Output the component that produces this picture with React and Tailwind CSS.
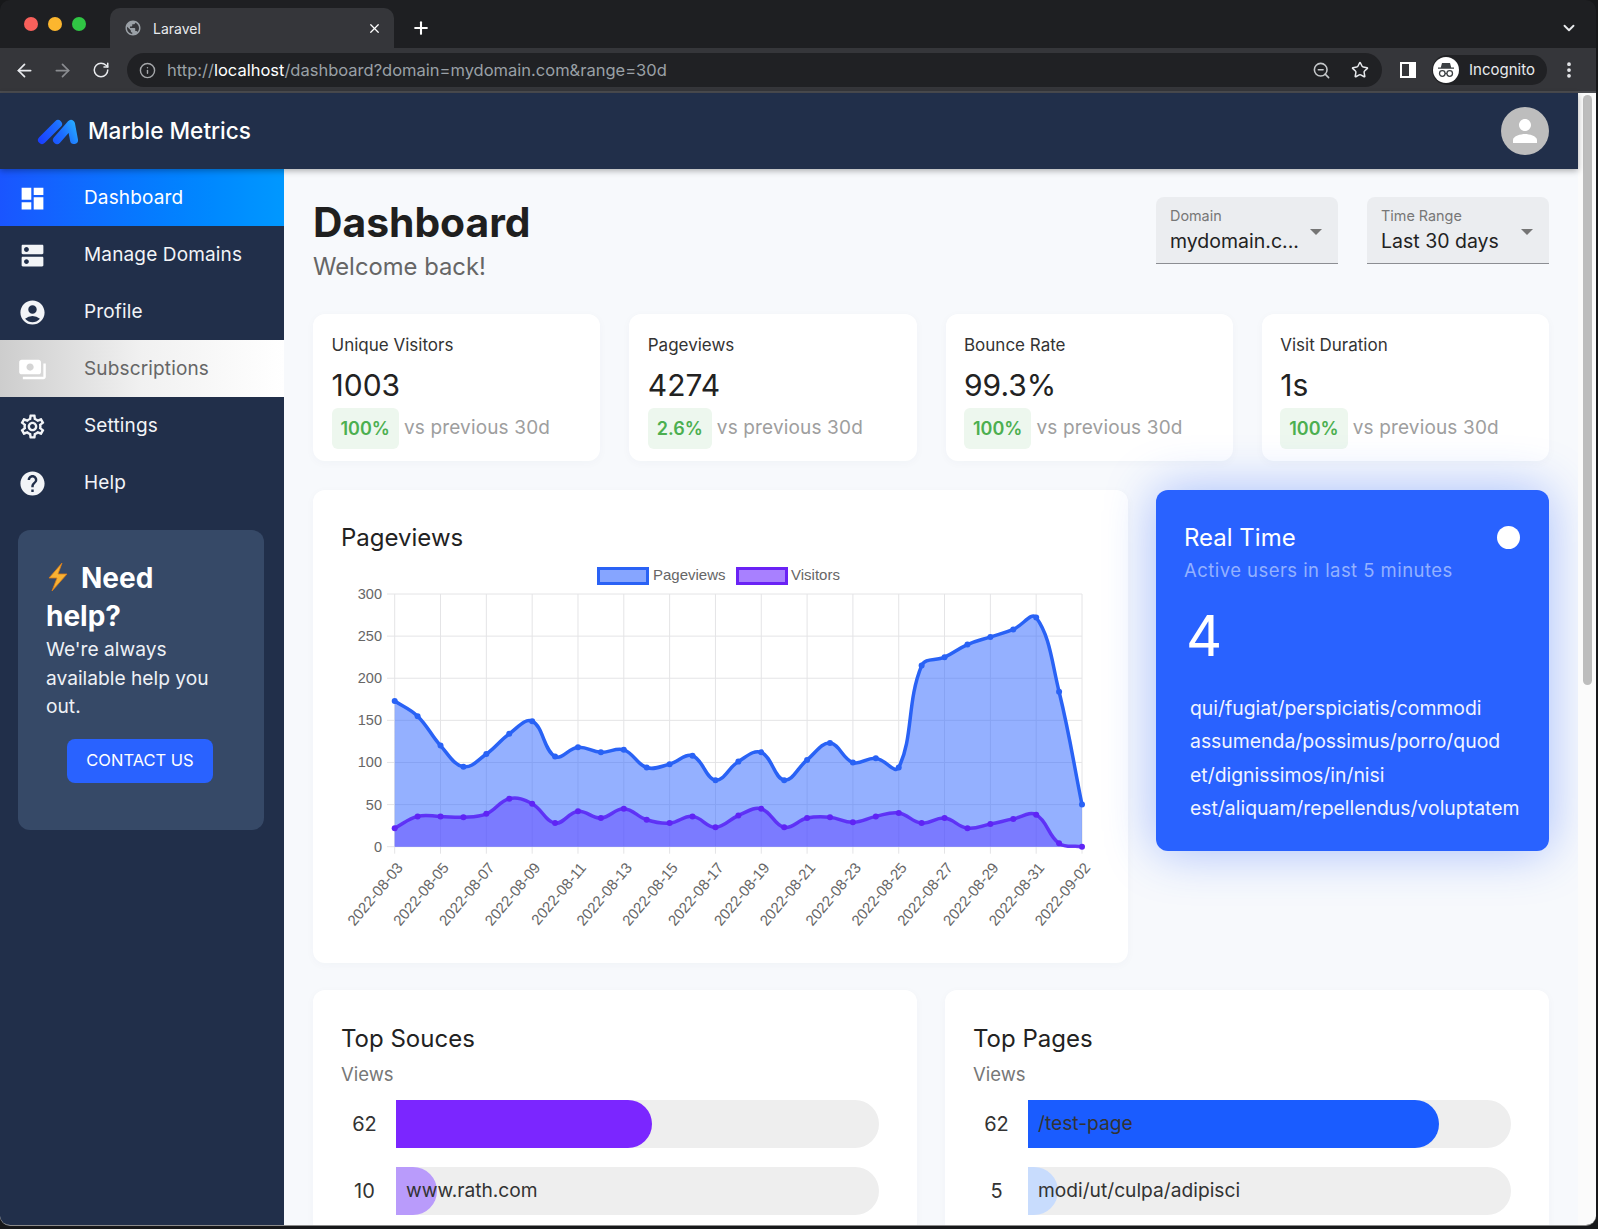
import { ArrowLeft, ArrowRight, RotateCw, Info, ZoomOut, Star, X as CloseIcon, Plus, ChevronDown, EllipsisVertical } from "lucide-react";
import { MdDashboard, MdDns, MdAccountCircle, MdPayments, MdOutlineSettings, MdHelp, MdPerson, MdPublic } from "react-icons/md";

const pageviews = [173, 155, 120, 95, 110, 134, 149, 107, 118, 112, 115, 94, 98, 108, 79, 101, 112, 79, 103, 123, 100, 105, 94, 215, 225, 240, 249, 258, 272, 184, 50];
const visitors = [22, 36, 36, 35, 39, 57, 51, 28, 42, 34, 45, 32, 28, 36, 23, 37, 45, 23, 34, 35, 29, 36, 40, 28, 34, 22, 27, 33, 38, 4, 0];
const dates = ["2022-08-03", "2022-08-05", "2022-08-07", "2022-08-09", "2022-08-11", "2022-08-13", "2022-08-15", "2022-08-17", "2022-08-19", "2022-08-21", "2022-08-23", "2022-08-25", "2022-08-27", "2022-08-29", "2022-08-31", "2022-09-02"];

const L = 394.7, R = 1082, T = 594, B = 846.7;
const X = (i) => L + ((R - L) / 30) * i;
const Y = (v) => B - ((B - T) / 300) * v;

// same bezier chart.js uses with tension 0.4
function linePath(data) {
  const pts = data.map((v, i) => [X(i), Y(v)]);
  let d = `M${pts[0][0]} ${pts[0][1]}`;
  const cps = pts.map((p, i) => {
    const a = pts[Math.max(i - 1, 0)], c = pts[Math.min(i + 1, pts.length - 1)];
    const d1 = Math.hypot(p[0] - a[0], p[1] - a[1]), d2 = Math.hypot(c[0] - p[0], c[1] - p[1]);
    const s = d1 + d2 || 1;
    const fa = (0.4 * d1) / s, fb = (0.4 * d2) / s;
    return [
      [p[0] - fa * (c[0] - a[0]), p[1] - fa * (c[1] - a[1])],
      [p[0] + fb * (c[0] - a[0]), p[1] + fb * (c[1] - a[1])],
    ];
  });
  for (let i = 1; i < pts.length; i++) {
    d += `C${cps[i - 1][1][0]} ${cps[i - 1][1][1]} ${cps[i][0][0]} ${cps[i][0][1]} ${pts[i][0]} ${pts[i][1]}`;
  }
  return d;
}

const menu = [
  { label: "Dashboard", icon: MdDashboard, kind: "active" },
  { label: "Manage Domains", icon: MdDns },
  { label: "Profile", icon: MdAccountCircle },
  { label: "Subscriptions", icon: MdPayments, kind: "light" },
  { label: "Settings", icon: MdOutlineSettings },
  { label: "Help", icon: MdHelp },
];

const stats = [
  { title: "Unique Visitors", value: "1003", change: "100%" },
  { title: "Pageviews", value: "4274", change: "2.6%" },
  { title: "Bounce Rate", value: "99.3%", change: "100%" },
  { title: "Visit Duration", value: "1s", change: "100%" },
];

function BrowserChrome() {
  return (
    <div className="shrink-0 font-['Inter',sans-serif]">
      <div className="flex h-[48px] items-end bg-[#1e1f22] pr-[18px]">
        <div className="flex h-full w-[110px] items-center gap-[10px] pb-[1px] pl-[24px]">
          <span className="h-[14px] w-[14px] rounded-full bg-[#f8605b]" />
          <span className="h-[14px] w-[14px] rounded-full bg-[#fcb62e]" />
          <span className="h-[14px] w-[14px] rounded-full bg-[#30c544]" />
        </div>
        <div className="flex h-[40px] w-[284px] items-center rounded-t-[10px] bg-[#35363a] pl-[14px] pr-[12px]">
          <MdPublic size={18} className="text-[#9aa0a6]" />
          <span className="ml-[11px] flex-1 text-[14px] text-[#e8eaed]">Laravel</span>
          <CloseIcon size={15} className="text-white" />
        </div>
        <Plus size={20} strokeWidth={2.5} className="mb-[10px] ml-[17px] text-white" />
        <ChevronDown size={18} strokeWidth={2.5} className="mb-[11px] ml-auto text-[#e8eaed]" />
      </div>
      <div className="flex h-[45px] items-center border-b-[2px] border-[#4b4c50] bg-[#35363a] pl-[14px] pr-[17px] pt-[1px]">
        <ArrowLeft size={21} className="text-[#e8eaed]" />
        <ArrowRight size={21} className="ml-[17px] text-[#8a8c90]" />
        <RotateCw size={18} className="ml-[19px] text-[#e8eaed]" />
        <div className="ml-[17px] flex h-[34px] w-[1255px] items-center rounded-full bg-[#202124] pl-[12px] pr-[13px]">
          <Info size={17} className="text-[#a5a7aa]" />
          <span className="ml-[11px] whitespace-nowrap text-[16.500px] text-[#9aa0a6]">
            http://<span className="text-white">localhost</span>/dashboard?domain=mydomain.com&amp;range=30d
          </span>
          <ZoomOut size={19} className="ml-auto text-[#c4c7c9]" />
          <Star size={18} className="ml-[20px] text-[#e8eaed]" />
        </div>
        <svg width="18" height="18" viewBox="0 0 18 18" className="ml-[17px]">
          <path d="M1 1h16v16H1z" fill="#fff" />
          <path d="M3 3h7v12H3z" fill="#35363a" />
        </svg>
        <div className="ml-[15px] flex h-[30px] w-[115px] items-center rounded-full bg-[#202124] pl-[1px]">
          <span className="flex h-[26px] w-[26px] items-center justify-center rounded-full bg-white">
            <svg width="20" height="20" viewBox="0 0 20 20" fill="#3c4043">
              <path d="M6 3h8l1.2 4.5H18v1.2H2V7.500h2.800z" />
              <circle cx="6.300" cy="13.500" r="2.800" fill="none" stroke="#3c4043" strokeWidth="1.300" />
              <circle cx="13.700" cy="13.500" r="2.800" fill="none" stroke="#3c4043" strokeWidth="1.300" />
              <path d="M9 13h2v1H9z" />
            </svg>
          </span>
          <span className="ml-[10px] text-[15px] text-[#e8eaed]">Incognito</span>
        </div>
        <EllipsisVertical size={20} strokeWidth={2.5} className="ml-auto text-[#e8eaed]" />
      </div>
    </div>
  );
}

function Logo() {
  return (
    <svg width="42" height="28" viewBox="0 0 42 28" fill="none">
      <defs>
        <linearGradient id="mm" x1="2" y1="26" x2="40" y2="3" gradientUnits="userSpaceOnUse">
          <stop offset="0" stopColor="#1a3dff" />
          <stop offset="0.55" stopColor="#1c6cff" />
          <stop offset="1" stopColor="#29b6ff" />
        </linearGradient>
      </defs>
      <path d="M5 23 21 7M20 23 34 7 37 23" stroke="url(#mm)" strokeWidth="8" strokeLinecap="round" strokeLinejoin="round" />
    </svg>
  );
}

function Bolt() {
  return (
    <svg width="24" height="28" viewBox="0 0 24 28" className="mr-[11px] inline-block align-[-3px]">
      <path d="M16 0 3 15h8L6 28l15-17h-9z" fill="#f9b233" stroke="#d97c1a" strokeWidth="0.800" />
    </svg>
  );
}

function Sidebar() {
  return (
    <aside className="w-[284px] shrink-0 bg-[#212f4a]">
      {menu.map((m) => {
        const Icon = m.icon;
        const bg = m.kind === "active"
          ? "bg-gradient-to-r from-[#1a55ff] to-[#0098ff] text-white"
          : m.kind === "light"
            ? "bg-gradient-to-r from-[#cdcdcd] via-[#f1f1f1] to-white text-[#666666]"
            : "text-[#f2f4f7]";
        return (
          <div key={m.label} className={`flex h-[57px] items-center pl-[18px] pt-[2px] ${bg}`}>
            <Icon size={29} className={m.kind === "light" ? "text-white" : ""} />
            <span className="ml-[37px] text-[19px] tracking-[0.15px]">{m.label}</span>
          </div>
        );
      })}
      <div className="ml-[18px] mt-[19px] h-[300px] w-[246px] rounded-xl bg-[#364967] pl-[28px] pr-[36px] pt-[29px] text-white">
        <h3 className="text-[28px] font-bold leading-[38px]"><Bolt />Need help?</h3>
        <p className="text-[19.200px] leading-[28.500px] text-[#eef1f6]">We're always available help you out.</p>
        <button className="ml-[21px] mt-[18px] flex h-[44px] w-[146px] items-center justify-center rounded-lg bg-[#2962ff] text-[16.500px] text-white">CONTACT US</button>
      </div>
    </aside>
  );
}

function Select({ label, value }) {
  return (
    <div className="relative h-[67px] w-[182px] rounded-t-lg border-b-[1.500px] border-[#8c8e93] bg-[#ebedf0] pl-[14px] pt-[10px]">
      <div className="text-[14.400px] leading-[18px] text-[#777777]">{label}</div>
      <div className="mt-[2px] text-[19.500px] leading-[28px] text-[#222222]">{value}</div>
      <span className="absolute right-[16px] top-[32px] h-0 w-0 border-x-[6px] border-t-[6px] border-x-transparent border-t-[#757575]" />
    </div>
  );
}

function StatCard({ title, value, change }) {
  return (
    <div className="h-[147px] rounded-xl bg-white pl-[18.500px] pt-[19px] shadow-[0_2px_10px_rgba(30,50,90,0.03)]">
      <div className="text-[17px] leading-[24px] text-[#333333]">{title}</div>
      <div className="mt-[8px] text-[30px] leading-[40px] text-[#222222]">{value}</div>
      <div className="mt-[3px] flex items-center">
        <span className="flex h-[41px] items-center rounded-md bg-[#edf7ee] px-[9px] text-[18px] font-semibold text-[#4caf50]">{change}</span>
        <span className="ml-[5px] text-[19px] tracking-[0.15px] text-[#9e9e9e]">vs previous 30d</span>
      </div>
    </div>
  );
}

function Chart() {
  const font = "'Liberation Sans',sans-serif";
  const ticks = Array.from({ length: 31 }, (_, i) => i);
  return (
    <svg width="759" height="375" viewBox="341 560 759 375" style={{ fontFamily: font }}>
      <rect x="598.500" y="568.500" width="49" height="15" fill="#86a5ff" stroke="#2a62f5" strokeWidth="3" />
      <text x="653" y="580" fontSize="15" fill="#666">Pageviews</text>
      <rect x="737.500" y="568.500" width="49" height="15" fill="#a880ff" stroke="#6a22f5" strokeWidth="3" />
      <text x="791" y="580" fontSize="15" fill="#666">Visitors</text>

      {[0, 50, 100, 150, 200, 250, 300].map((v) => (
        <g key={v}>
          <line x1="387" x2={R} y1={Y(v)} y2={Y(v)} stroke="#e4e4e6" />
          <text x="382" y={Y(v) + 5} fontSize="14.500" textAnchor="end" fill="#666">{v}</text>
        </g>
      ))}
      {ticks.filter((i) => i % 2 === 0).map((i) => (
        <line key={i} x1={X(i)} x2={X(i)} y1={T} y2={B + 7} stroke="#e4e4e6" />
      ))}
      {dates.map((d, idx) => (
        <text key={d} transform={`translate(${X(idx * 2) + 9} 868) rotate(-50)`} fontSize="15" textAnchor="end" fill="#666">{d}</text>
      ))}

      <path d={`${linePath(pageviews)}L${R} ${B}L${L} ${B}Z`} fill="rgba(41,98,255,0.5)" />
      <path d={`${linePath(visitors)}L${R} ${B}L${L} ${B}Z`} fill="rgba(98,70,255,0.5)" />
      <path d={linePath(pageviews)} fill="none" stroke="#2962f5" strokeWidth="3.500" />
      <path d={linePath(visitors)} fill="none" stroke="#5a28f5" strokeWidth="3.500" opacity="0.9" />
      {ticks.map((i) => <circle key={i} cx={X(i)} cy={Y(pageviews[i])} r="3" fill="#2962f5" />)}
      {ticks.map((i) => <circle key={i} cx={X(i)} cy={Y(visitors[i])} r="3" fill="#5f24f5" />)}
    </svg>
  );
}

function RealTime() {
  const rows = ["qui/fugiat/perspiciatis/commodi", "assumenda/possimus/porro/quod", "et/dignissimos/in/nisi", "est/aliquam/repellendus/voluptatem"];
  return (
    <div className="h-[361px] w-[393px] shrink-0 rounded-xl bg-[#2962ff] pl-[28px] pr-[29px] pt-[30px] text-white shadow-[0_0_50px_rgba(41,98,255,0.4)]">
      <div className="flex items-center justify-between">
        <span className="text-[24px] leading-[36px]">Real Time</span>
        <span className="mb-[2px] h-[23px] w-[23px] rounded-full bg-white" />
      </div>
      <div className="text-[18.500px] leading-[28px] tracking-[0.45px] text-[#93b1ff]">Active users in last 5 minutes</div>
      <div className="mt-[18px] pl-[2px] text-[56px] leading-[68px]">4</div>
      <ul className="mt-[22px] pl-[6px] text-[19.400px] leading-[33.300px] text-[#f2f5ff]">
        {rows.map((r) => <li key={r}>{r}</li>)}
      </ul>
    </div>
  );
}

function BarRow({ count, pct, label, fill }) {
  return (
    <div className="flex h-[48px] items-center">
      <span className="w-[55px] pr-[8px] text-center text-[20px] text-[#333333]">{count}</span>
      <div className="relative h-full flex-1 overflow-hidden rounded-r-[24px] bg-[#eeeeee]">
        <div className={`h-full rounded-r-[24px] ${fill}`} style={{ width: pct }} />
        <span className="absolute left-[10px] top-[8px] text-[19.200px] leading-[30px] text-[#333333]">{label}</span>
      </div>
    </div>
  );
}

function ListCard({ title, rows, fills }) {
  return (
    <div className="rounded-xl bg-white pb-[20px] pl-[28px] pr-[38px] pt-[31px] shadow-[0_2px_10px_rgba(30,50,90,0.03)]">
      <div className="text-[24px] leading-[36px] text-[#222222]">{title}</div>
      <div className="mt-[3px] text-[18.500px] leading-[28px] text-[#777777]">Views</div>
      <div className="mt-[12px] flex flex-col gap-[19px]">
        {rows.map((r, i) => <BarRow key={r.count} {...r} fill={fills[i]} />)}
      </div>
    </div>
  );
}

export default function App() {
  return (
    <div className="h-screen w-screen overflow-hidden bg-[#17181a] font-['Inter',sans-serif]">
      <div className="flex h-[1226px] w-[1596px] flex-col overflow-hidden rounded-[10px] border-b border-[#8a8a8a]">
        <BrowserChrome />
        <div className="flex min-h-0 flex-1 bg-[#fbfbfb]">
          <div className="flex w-[1578px] shrink-0 flex-col">
            <header className="relative z-10 flex h-[76px] shrink-0 items-center justify-between bg-[#212f4a] pl-[37px] pr-[29px] shadow-[0_2px_6px_rgba(0,0,0,0.3)]">
              <div className="flex items-center">
                <Logo />
                <span className="ml-[9px] text-[22.600px] font-medium text-white">Marble Metrics</span>
              </div>
              <span className="flex h-[48px] w-[48px] items-center justify-center rounded-full bg-[#bdbdbd]">
                <MdPerson size={36} className="text-white" />
              </span>
            </header>
            <div className="flex min-h-0 flex-1">
              <Sidebar />
              <main className="min-w-0 flex-1 overflow-hidden bg-[#f7f9fc] px-[29px] pt-[28px]">
                <div className="flex items-start justify-between">
                  <div>
                    <h1 className="text-[40.800px] font-bold leading-[50px] text-[#1f1f1f]">Dashboard</h1>
                    <p className="mt-[2px] text-[23.800px] leading-[36px] text-[#666666]">Welcome back!</p>
                  </div>
                  <div className="flex gap-[29px]">
                    <Select label="Domain" value="mydomain.c..." />
                    <Select label="Time Range" value="Last 30 days" />
                  </div>
                </div>
                <div className="mt-[29px] grid grid-cols-4 gap-[29px]">
                  {stats.map((s) => <StatCard key={s.title} {...s} />)}
                </div>
                <div className="mt-[29px] flex items-start gap-[28px]">
                  <div className="h-[473px] w-[815px] shrink-0 rounded-xl bg-white pl-[28px] pt-[30px] shadow-[0_2px_10px_rgba(30,50,90,0.03)]">
                    <div className="mb-[4px] text-[24px] leading-[36px] text-[#222222]">Pageviews</div>
                    <Chart />
                  </div>
                  <RealTime />
                </div>
                <div className="mt-[27px] grid grid-cols-2 gap-[28px]">
                  <ListCard
                    title="Top Souces"
                    fills={["bg-[#7b26ff]", "bg-[#b99bfb]"]}
                    rows={[{ count: 62, pct: "53%", label: "" }, { count: 10, pct: "8.500%", label: "www.rath.com" }]}
                  />
                  <ListCard
                    title="Top Pages"
                    fills={["bg-[#1a5cff]", "bg-[#c8dcfd]"]}
                    rows={[{ count: 62, pct: "85%", label: "/test-page" }, { count: 5, pct: "6.200%", label: "modi/ut/culpa/adipisci" }]}
                  />
                </div>
              </main>
            </div>
          </div>
          <div className="flex-1 pl-[5px] pt-[2px]">
            <div className="h-[590px] w-[9px] rounded-full bg-[#bdbdbd]" />
          </div>
        </div>
      </div>
    </div>
  );
}
